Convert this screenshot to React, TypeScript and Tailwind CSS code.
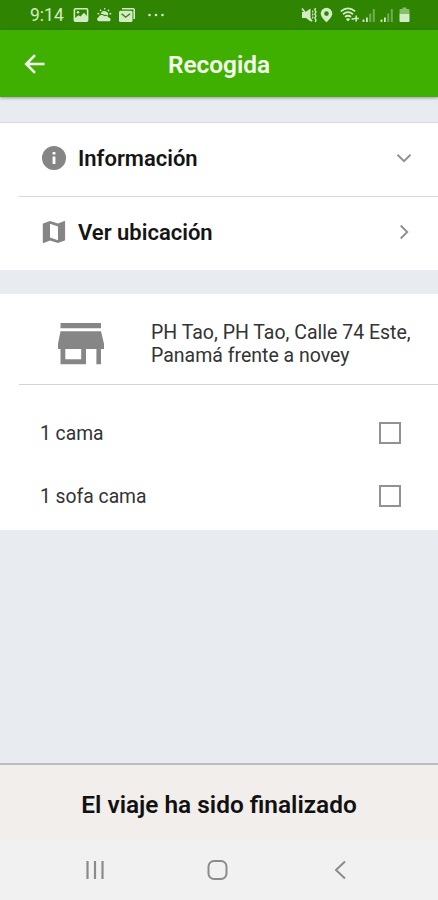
import { useState } from "react"

interface MenuRow {
  label: string
  icon: "info" | "map"
  arrow: string
}

const menuRows: MenuRow[] = [
  { label: "Información", icon: "info", arrow: "M5.500 8.700L12 15.200l6.500-6.500" },
  { label: "Ver ubicación", icon: "map", arrow: "M8.700 5.500l6.500 6.500-6.500 6.500" },
]

const items = ["1 cama", "1 sofa cama"]

const iconPaths = {
  info: "M12 0a12 12 0 1 0 0 24 12 12 0 0 0 0-24zm1.400 18h-2.800v-7.400h2.800V18zm0-9.400h-2.800V6h2.800v2.600z",
  map: "M22.600 1l-.2.1L16 3.600 8 1 1.200 3.400a.6.6 0 0 0-.4.600v18.300c0 .4.300.7.700.7l.2-.1L8 20.400l8 2.600 6.700-2.400a.6.6 0 0 0 .4-.600V1.700a.7.7 0 0 0-.5-.7zM16 20.300l-8-2.700V3.700l8 2.700v13.900z",
}

function Signal() {
  return (
    <svg width="14" height="16" viewBox="0 0 14 16" fill="currentColor">
      <path d="M.6 12.500h1.800V15H.6zM4 10.500h1.800V15H4z" />
      <path opacity=".4" d="M7.200 6.500h2V15h-2zM10.800 2h2v13h-2z" />
    </svg>
  )
}

function StatusBar() {
  return (
    <div className="flex h-[30px] items-center bg-[#2f8502] pl-[30px] pr-[27px] text-[#d3ecc5]">
      <span className="w-[36px] pt-[1px] text-[17.5px] leading-[29px] whitespace-nowrap">9:14</span>
      {/* gallery */}
      <svg className="ml-[7px]" width="16" height="16" viewBox="0 0 16 16">
        <rect x="1.400" y="1.700" width="13.200" height="12.600" rx="1" fill="none" stroke="currentColor" strokeWidth="1.600" />
        <path fill="currentColor" d="M2 11l3.500-2.800 2 1.300 3.400-3.800L14 9v5H2z" />
        <circle cx="5" cy="5.200" r="1.200" fill="currentColor" />
      </svg>
      {/* weather */}
      <svg className="ml-[7px]" width="16" height="16" viewBox="0 0 16 16">
        <path fill="currentColor" d="M2.800 14.200a2 2 0 0 1-.3-3.900 3.300 3.300 0 0 1 5.800-1 3 3 0 0 1 4.400 1.500 1.800 1.800 0 0 1 .9 3.400z" />
        <path fill="currentColor" d="M4.800 7a3.600 3.600 0 0 1 7.200 1.700Q10 7.200 8.500 8 7 6.500 4.800 7z" />
        <path stroke="currentColor" strokeWidth="1.300" d="M8.700 1v1.600M4 2.800l1.200 1.200M13.200 2.800L12 4M1.500 6.500l1.800.4M15.200 6.500l-1.800.4" />
      </svg>
      {/* mail */}
      <svg className="ml-[6px]" width="18" height="16" viewBox="0 0 18 16">
        <path fill="none" stroke="currentColor" strokeWidth="1.600" d="M4 1.800h11.200q1 0 1 1V12" />
        <rect x="1" y="3.800" width="13.500" height="11.200" rx="1.500" fill="currentColor" />
        <path fill="none" stroke="#2f8502" strokeWidth="1.400" d="M3.600 6.700l4 3.500 4.500-3.500" />
      </svg>
      <svg className="ml-[11px]" width="18" height="4" viewBox="0 0 18 4" fill="currentColor">
        <circle cx="2.500" cy="2" r="1.300" />
        <circle cx="9" cy="2" r="1.300" />
        <circle cx="15.500" cy="2" r="1.300" />
      </svg>

      {/* muted, vibrating */}
      <svg className="ml-auto" width="17" height="16" viewBox="0 0 17 16">
        <path fill="currentColor" d="M1 5h3.500L9.500 1.500v13L5 11H1z" />
        <path stroke="currentColor" strokeWidth="1.600" d="M1 1.500l10 12.800" />
        <path fill="none" stroke="currentColor" strokeWidth="1.200" strokeDasharray="2 1" d="M11.700 3.500v9" />
        <path fill="none" stroke="currentColor" strokeWidth="1.400" d="M14.500 1l-.7 2 1.200 2-1.200 2L15 9l-1.200 2 1.200 2-.7 2" />
      </svg>
      {/* location */}
      <svg className="ml-[2px]" width="14" height="16" viewBox="0 0 14 16">
        <path fill="currentColor" fillRule="evenodd" d="M6.500.8A5.800 5.800 0 0 0 .7 6.600c0 3.900 5.800 8.700 5.800 8.700s5.800-4.800 5.800-8.700A5.800 5.800 0 0 0 6.500.8zm0 3.500a2.300 2.300 0 1 1 0 4.600 2.300 2.300 0 0 1 0-4.600z" />
      </svg>
      {/* wifi */}
      <svg className="ml-[6px]" width="20" height="16" viewBox="0 0 20 16">
        <path fill="none" stroke="currentColor" strokeWidth="1.800" d="M.8 4.400Q8-1.600 15.200 4.400M3 7.200Q8 3 13 7.200M5 9.900q3-2.400 6 0" />
        <path fill="currentColor" d="M5.800 12q2.200-1.500 4.400 0L8 14.500z" />
        <path stroke="currentColor" strokeWidth="1.500" d="M11.500 12h2.500M16.200 8.500v6M13.800 11.500h5" />
      </svg>
      <div className="ml-[2px] flex gap-[4px]">
        <Signal />
        <Signal />
      </div>
      {/* battery */}
      <svg className="ml-[5px]" width="12" height="16" viewBox="0 0 12 16" fill="currentColor">
        <path opacity=".55" d="M3.500.5h4V2h2q1 0 1 1v4H.5V3q0-1 1-1h2z" />
        <path d="M.5 7h10v7q0 1-1 1h-8q-1 0-1-1z" />
      </svg>
    </div>
  )
}

export default function App() {
  const [checked, setChecked] = useState<string[]>([])

  const toggle = (item: string) => {
    setChecked(prev =>
      prev.includes(item) ? prev.filter(i => i !== item) : [...prev, item]
    )
  }

  return (
    <div className="flex h-[900px] w-[438px] flex-col overflow-hidden bg-[#e8ebf0] font-['Roboto',sans-serif] text-[#151515]">
      <StatusBar />

      <header className="grid h-[67px] shrink-0 grid-cols-[1fr_auto_1fr] items-center bg-[#40b000] text-[#f6ffef] shadow-[0_1px_3px_rgba(0,0,0,0.35)]">
        <button className="ml-[22px] w-[26px]" aria-label="Atrás">
          <svg width="26" height="26" viewBox="0 0 26 26" fill="none" stroke="currentColor" strokeWidth="2.600">
            <path d="M22.500 13H4.500M13 4.200L4.200 13l8.800 8.800" />
          </svg>
        </button>
        <h1 className="pt-[4px] text-[24.4px] font-semibold">Recogida</h1>
      </header>

      <section className="mt-[25px] h-[148px] shrink-0 border-t border-[#d9dadd] bg-white">
        {menuRows.map((row, i) => (
          <div key={row.label} className={i === 0 ? "ml-[19px] flex h-[74px] items-center border-b border-[#d9d9d9] pr-[22px] pb-[3px] pl-[23px]" : "ml-[19px] flex h-[72px] items-center pr-[22px] pb-[2px] pl-[23px]"}>
            <svg className="shrink-0 text-[#858585]" width="24" height="24" viewBox="0 0 24 24" fill="currentColor" fillRule="evenodd">
              <path d={iconPaths[row.icon]} />
            </svg>
            <span className="ml-[12px] text-[22px] font-semibold">{row.label}</span>
            <svg className="ml-auto text-[#929292]" width="24" height="24" viewBox="0 0 24 24" fill="none" stroke="currentColor" strokeWidth="2">
              <path d={row.arrow} />
            </svg>
          </div>
        ))}
      </section>

      <section className="mt-[24px] h-[236px] shrink-0 bg-white">
        <div className="ml-[19px] flex h-[91px] items-center border-b border-[#d4d4d4] pl-[38px]">
          <svg className="mt-[9px] shrink-0 text-[#868686]" width="48" height="42" viewBox="0 0 48 42" fill="currentColor" fillRule="evenodd">
            <path d="M3.500 0h40.500v5.300H3.500zM3.500 8.300h40.500L47 20.800v5.200h-3v15.300h-4.600V26H29v15.300H3.500V26H1v-5.200zM8.300 26v10.300h15.900V26z" />
          </svg>
          <p className="mt-[9px] ml-[46px] text-[19.5px] leading-[23px] whitespace-nowrap text-[#333]">
            PH Tao, PH Tao, Calle 74 Este,
            <br />
            Panamá frente a novey
          </p>
        </div>
        <div className="pt-[16px]">
          {items.map((item) => (
            <label key={item} className="flex h-[63px] items-center justify-between pr-[37px] pl-[40px] text-[19.3px] text-[#333]">
              <span className="pt-[3px]">{item}</span>
              <input
                type="checkbox"
                checked={checked.includes(item)}
                onChange={() => toggle(item)}
                className="size-[22px] appearance-none border-2 border-[#929292] bg-white checked:bg-[#40b000]"
              />
            </label>
          ))}
        </div>
      </section>

      <footer className="mt-auto shrink-0">
        <div className="flex h-[77px] items-center justify-center border-t-2 border-[#bebdbc] bg-[#f1eeeb] pt-[6px] text-[24.4px] font-semibold text-[#111]">
          El viaje ha sido finalizado
        </div>
        <nav className="flex h-[60px] items-center bg-[#f1f1f1] pl-[83px] text-[#8b8b8b]">
          <svg width="24" height="24" viewBox="0 0 24 24" fill="none" stroke="currentColor" strokeWidth="2.200">
            <path d="M4.500 3v18M12 3v18M19.500 3v18" />
          </svg>
          <svg className="ml-[99px]" width="24" height="24" viewBox="0 0 24 24" fill="none" stroke="currentColor" strokeWidth="2">
            <rect x="2.500" y="3" width="18" height="18" rx="5.500" />
          </svg>
          <svg className="ml-[99px]" width="24" height="24" viewBox="0 0 24 24" fill="none" stroke="currentColor" strokeWidth="2">
            <path d="M16 3.500L7 12l9 8.500" />
          </svg>
        </nav>
      </footer>
    </div>
  )
}
